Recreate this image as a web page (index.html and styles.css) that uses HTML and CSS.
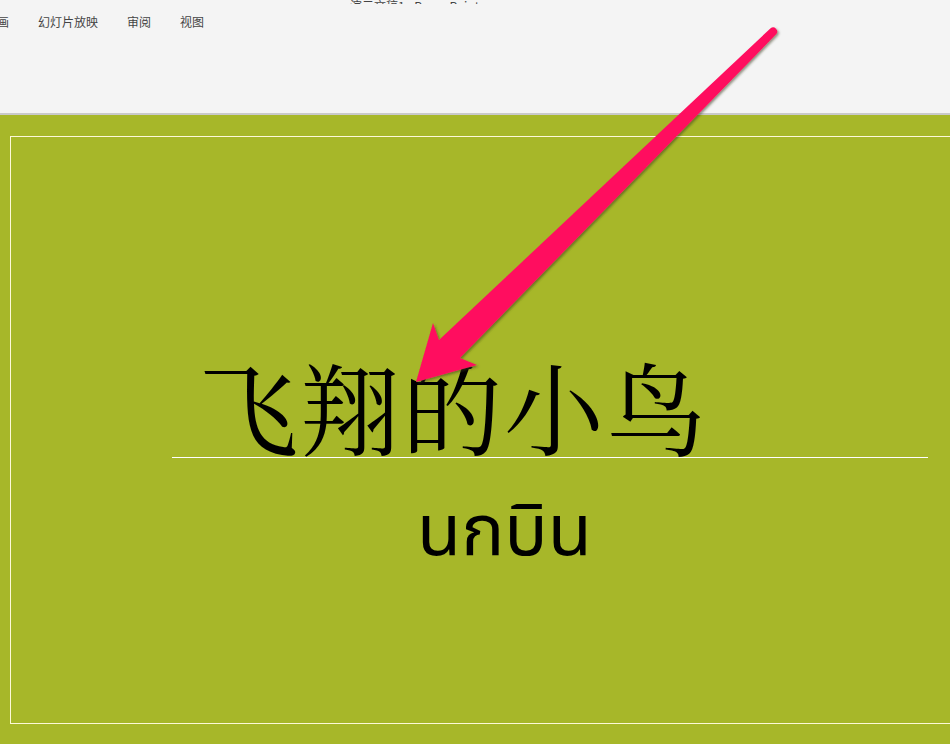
FILE: index.html
```html
<!DOCTYPE html>
<html lang="zh">
<head>
<meta charset="utf-8">
<title>演示文稿1 - PowerPoint</title>
<link rel="stylesheet" href="styles.css">
</head>
<body>
<div class="ribbon">
  <div class="app-title">演示文稿1 - PowerPoint</div>
  <nav class="tabs">
    <span class="tab first">画</span>
    <span class="tab">幻灯片放映</span>
    <span class="tab">审阅</span>
    <span class="tab">视图</span>
  </nav>
</div>
<main class="stage">
  <section class="slide">
    <div class="title-box"><h1 class="title">飞翔的小鸟</h1></div>
    <p class="subtitle" lang="th">นกบิน</p>
  </section>
</main>
<svg class="arrow" width="950" height="744" viewBox="0 0 950 744" xmlns="http://www.w3.org/2000/svg">
  <defs>
    <filter id="sh" x="-10%" y="-10%" width="130%" height="130%">
      <feDropShadow dx="1.5" dy="1.5" stdDeviation="1.2" flood-color="#3a3a1a" flood-opacity="0.55"/>
    </filter>
  </defs>
  <g filter="url(#sh)" fill="#ff0f5e">
    <path d="M770.6 28.2 A4.2 4.2 0 0 1 776.4 34.1 L460 358 L477 365 L416 382 L433 323 L439 340 Z"/>
  </g>
</svg>
</body>
</html>
```
FILE: styles.css
```css
html, body {
  margin: 0;
  padding: 0;
}
body {
  width: 950px;
  height: 744px;
  overflow: hidden;
  position: relative;
  background: #a7b729;
  font-family: "Microsoft YaHei", "Noto Sans CJK SC", "Liberation Sans", sans-serif;
}
.ribbon {
  height: 113px;
  background: #f4f4f4;
  border-bottom: 2px solid #c9c9c9;
  box-sizing: content-box;
}
.app-title {
  height: 4px;
  overflow: hidden;
  font-size: 12px;
  line-height: 12px;
  color: #444;
  padding-left: 350px;
  white-space: nowrap;
}
.tabs {
  display: flex;
  padding-top: 10px;
  margin-left: -3px;
  font-size: 12px;
  line-height: 16px;
  color: #444;
}
.tab { margin-right: 29px; }
.stage {
  padding: 21px 0 0 10px;
}
.slide {
  width: 1000px;
  height: 586px;
  border: 1px solid #fdf9d8;
  box-sizing: content-box;
}
.title-box {
  margin: 215px 0 0 161px;
  width: 756px;
  height: 105px;
  border-bottom: 1px solid #ffffff;
  display: flex;
  align-items: flex-end;
}
.title {
  margin: 0 0 2px 26px;
  font-family: "Noto Serif CJK SC", "Source Han Serif SC", "Noto Sans CJK SC", serif;
  font-weight: normal;
  font-size: 100px;
  line-height: 1;
  color: #000;
  letter-spacing: 2px;
}
.subtitle {
  margin: 32px 0 0 406px;
  font-family: "Noto Sans Thai", "Noto Sans", "DejaVu Sans", sans-serif;
  font-size: 72px;
  line-height: 1.2;
  color: #000;
}
.arrow {
  position: absolute;
  left: 0;
  top: 0;
  pointer-events: none;
}
```
